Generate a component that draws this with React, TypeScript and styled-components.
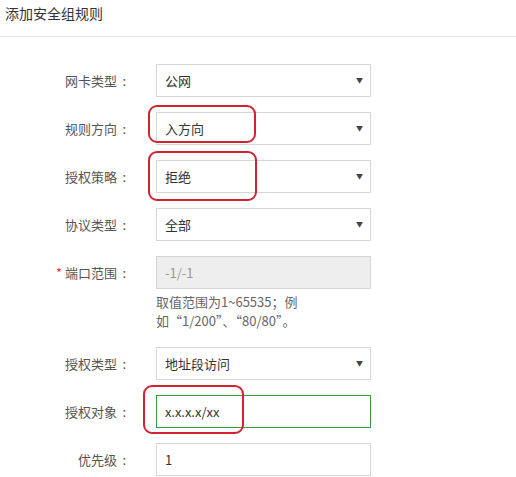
import React from 'react';
import styled, { createGlobalStyle } from 'styled-components';

const GlobalStyle = createGlobalStyle`
  body {
    margin: 0;
    background: #fff;
    font-family: "Noto Sans CJK SC", "Noto Sans", "Liberation Sans", sans-serif;
    font-size: 13px;
    color: #333;
  }
`;

const Page = styled.div`
  width: 516px;
  height: 477px;
  overflow: hidden;
`;

const Header = styled.div`
  height: 37px;
  border-bottom: 1px solid #e6e6e6;
  box-sizing: border-box;
  padding: 3px 0 0 5px;
  font-size: 14px;
  line-height: 20px;
  color: #333;
`;

const Form = styled.div`
  padding-top: 27px;
  display: flex;
  flex-direction: column;
  gap: 15px;
`;

const Row = styled.div`
  display: flex;
  align-items: flex-start;
`;

const Label = styled.div`
  width: 126px;
  margin-right: 30px;
  text-align: right;
  line-height: 33px;
  color: #555;
  white-space: nowrap;
`;

const Colon = styled.span`
  display: inline-block;
  width: 9px;
  text-align: right;
`;

const Star = styled.span`
  color: #e4393c;
  margin-right: 3px;
`;

const Field = styled.div`
  position: relative;
  width: 215px;
`;

const Box = styled.div<{ $disabled?: boolean; $active?: boolean }>`
  height: 33px;
  box-sizing: border-box;
  border: 1px solid ${p => (p.$active ? '#3c9a3c' : '#d6d6d6')};
  background: ${p => (p.$disabled ? '#eeeeee' : '#fff')};
  color: ${p => (p.$disabled ? '#999' : '#333')};
  padding: 0 7px 0 8px;
  display: flex;
  align-items: center;
  justify-content: space-between;
  line-height: 31px;
`;

const Arrow = styled.span`
  font-size: 7px;
  color: #444;
`;

const Hint = styled.div`
  width: 150px;
  margin: 3px 0 2px;
  line-height: 19px;
  color: #666;
`;

const Mark = styled.div<{ $l: number; $t: number; $w: number; $h: number }>`
  position: absolute;
  left: ${p => p.$l}px;
  top: ${p => p.$t}px;
  width: ${p => p.$w}px;
  height: ${p => p.$h}px;
  box-sizing: border-box;
  border: 2px solid #d2232f;
  border-radius: 9px;
  pointer-events: none;
`;

type MarkBox = { l: number; t: number; w: number; h: number };

const Select = ({ value, mark }: { value: string; mark?: MarkBox }) => (
  <Field>
    <Box>
      <span>{value}</span>
      <Arrow>▼</Arrow>
    </Box>
    {mark && <Mark $l={mark.l} $t={mark.t} $w={mark.w} $h={mark.h} />}
  </Field>
);

const FieldLabel = ({ text, required }: { text: string; required?: boolean }) => (
  <Label>
    {required && <Star>*</Star>}
    {text}
    <Colon>:</Colon>
  </Label>
);

const App = () => (
  <Page>
    <GlobalStyle />
    <Header>添加安全组规则</Header>
    <Form>
      <Row>
        <FieldLabel text="网卡类型" />
        <Select value="公网" />
      </Row>
      <Row>
        <FieldLabel text="规则方向" />
        <Select value="入方向" mark={{ l: -8, t: -7, w: 108, h: 38 }} />
      </Row>
      <Row>
        <FieldLabel text="授权策略" />
        <Select value="拒绝" mark={{ l: -8, t: -9, w: 109, h: 50 }} />
      </Row>
      <Row>
        <FieldLabel text="协议类型" />
        <Select value="全部" />
      </Row>
      <Row>
        <FieldLabel text="端口范围" required />
        <Field>
          <Box $disabled>-1/-1</Box>
          <Hint>取值范围为1~65535；例如“1/200”、“80/80”。</Hint>
        </Field>
      </Row>
      <Row>
        <FieldLabel text="授权类型" />
        <Select value="地址段访问" />
      </Row>
      <Row>
        <FieldLabel text="授权对象" />
        <Field>
          <Box $active>x.x.x.x/xx</Box>
          <Mark $l={-13} $t={-10} $w={101} $h={49} />
        </Field>
      </Row>
      <Row>
        <FieldLabel text="优先级" />
        <Field>
          <Box>1</Box>
        </Field>
      </Row>
    </Form>
  </Page>
);

export default App;
